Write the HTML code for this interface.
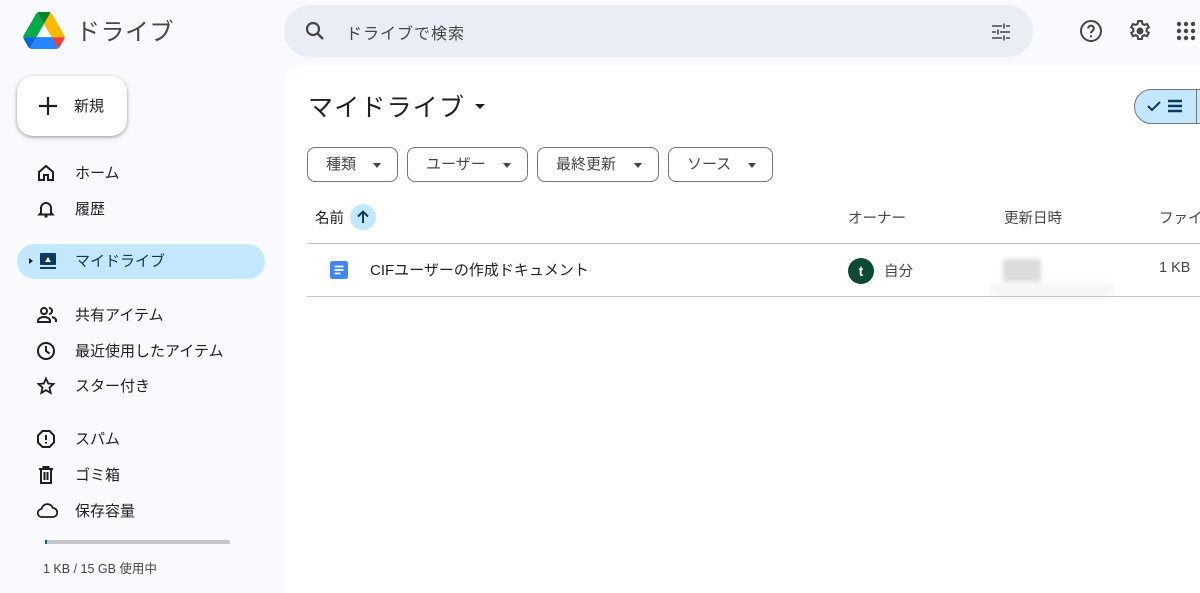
<!DOCTYPE html>
<html><head><meta charset="utf-8">
<style>
*{margin:0;padding:0;box-sizing:border-box}
html{width:1200px;height:593px;overflow:hidden}
body{width:1200px;height:593px;background:#f8fafd;font-family:"Liberation Sans","Noto Sans CJK JP",sans-serif;color:#1f1f1f;position:relative;overflow:hidden;white-space:nowrap}
.a{position:absolute}
.nav{position:absolute;left:0;width:270px;height:36px;font-size:15px;color:#1f1f1f}
.nav svg{position:absolute;left:36px;top:8px}
.nav span{position:absolute;left:75px;top:7px}
.chip{position:absolute;top:147px;height:35px;border:1px solid #747775;border-radius:8px;font-size:15px;color:#444746}
.chip span{position:absolute;left:18px;top:5px}
.chip i{position:absolute;right:16px;top:15px;border-left:4.5px solid transparent;border-right:4.5px solid transparent;border-top:5px solid #444746}
</style></head><body>
<svg class="a" style="left:23px;top:12px" width="42" height="37" viewBox="0 0 87.3 78">
<path d="M6.6 66.85l3.85 6.65c.8 1.4 1.950 2.5 3.3 3.3L27.5 53H0c0 1.55.4 3.1 1.2 4.5z" fill="#0066da"/>
<path d="M43.65 25L29.9 1.2c-1.35.8-2.5 1.9-3.3 3.3L1.2 48.5A9 9 0 000 53h27.5z" fill="#00ac47"/>
<path d="M73.55 76.8c1.35-.8 2.5-1.9 3.3-3.3l1.6-2.750 7.65-13.25c.8-1.4 1.2-2.95 1.2-4.5H59.8l5.850 11.5z" fill="#ea4335"/>
<path d="M43.65 25L57.4 1.2C56.05.4 54.5 0 52.9 0H34.4c-1.6 0-3.15.45-4.5 1.2z" fill="#00832d"/>
<path d="M59.8 53H27.5L13.75 76.8c1.35.8 2.9 1.2 4.5 1.2h50.8c1.6 0 3.15-.45 4.5-1.2z" fill="#2684fc"/>
<path d="M73.4 26.5L60.7 4.5c-.8-1.4-1.95-2.5-3.3-3.3L43.65 25 59.8 53h27.45c0-1.55-.4-3.1-1.2-4.5z" fill="#ffba00"/>
</svg>
<div class="a" style="left:76px;top:12px;font-size:24px;color:#444746;letter-spacing:0.5px">ドライブ</div>
<div class="a" style="left:284px;top:5px;width:749px;height:52px;border-radius:26px;background:#e9eef6"></div>
<svg class="a" style="left:303px;top:19px" width="24" height="24" viewBox="0 0 24 24"><circle cx="10" cy="10" r="6" fill="none" stroke="#444746" stroke-width="2.2"/><path d="M14.5 14.5L20 20" stroke="#444746" stroke-width="2.4"/></svg>
<div class="a" style="left:346px;top:20px;font-size:16px;color:#444746;letter-spacing:1px">ドライブで検索</div>
<svg class="a" style="left:989px;top:20px" width="24" height="24" viewBox="0 0 24 24" stroke="#444746" stroke-width="1.6" fill="none"><path d="M3 6h10M17 6h4M15 3.5v5M3 12h4M11 12h10M9 9.5v5M3 18h10M17 18h4M15 15.5v5"/></svg>
<svg class="a" style="left:1079px;top:19px" width="24" height="24" viewBox="0 0 24 24"><circle cx="12" cy="12" r="10" fill="none" stroke="#444746" stroke-width="2"/><path d="M9.2 9.5a2.8 2.8 0 115 1.7c-1.2 1-2.2 1.3-2.2 3" fill="none" stroke="#444746" stroke-width="2"/><circle cx="12" cy="17.3" r="1.2" fill="#444746"/></svg>
<svg class="a" style="left:1127px;top:18px" width="26" height="26" viewBox="0 0 24 24"><path fill="none" stroke="#444746" stroke-width="1.9" d="M10.3 2.8h3.4l.5 2.6 1.7 1 2.5-.9 1.7 2.9-2 1.7v2l2 1.7-1.7 2.9-2.5-.9-1.7 1-.5 2.6h-3.4l-.5-2.6-1.7-1-2.5.9-1.7-2.9 2-1.7v-2l-2-1.7 1.7-2.9 2.5.9 1.7-1z"/><circle cx="12" cy="12" r="3.2" fill="#444746"/></svg>
<svg class="a" style="left:1176px;top:21px" width="24" height="20" viewBox="0 0 24 20" fill="#444746"><circle cx="3" cy="3" r="2.2"/><circle cx="10" cy="3" r="2.2"/><circle cx="17" cy="3" r="2.2"/><circle cx="3" cy="10" r="2.2"/><circle cx="10" cy="10" r="2.2"/><circle cx="17" cy="10" r="2.2"/><circle cx="3" cy="17" r="2.2"/><circle cx="10" cy="17" r="2.2"/><circle cx="17" cy="17" r="2.2"/></svg>
<div class="a" style="left:17px;top:76px;width:110px;height:60px;border-radius:16px;background:#fff;box-shadow:0 1px 3px rgba(0,0,0,.3),0 2px 6px rgba(0,0,0,.12)"></div>
<svg class="a" style="left:37px;top:95px" width="22" height="22" viewBox="0 0 22 22"><path d="M11 2v18M2 11h18" stroke="#1f1f1f" stroke-width="2.2"/></svg>
<div class="a" style="left:74px;top:95px;font-size:15px">新規</div>
<div class="nav" style="top:155px"><svg width="20" height="20" viewBox="0 0 20 20" fill="none" stroke="#1f1f1f" stroke-width="2"><path d="M3 9l7-6 7 6v8h-5v-5H8v5H3z"/></svg><span>ホーム</span></div>
<div class="nav" style="top:191px"><svg width="20" height="20" viewBox="0 0 20 20" fill="none" stroke="#1f1f1f" stroke-width="2"><path d="M5 14V9a5 5 0 0110 0v5l1.5 1.5h-13zM8.5 17.5h3"/></svg><span>履歴</span></div>
<div class="a" style="left:17px;top:244px;width:248px;height:35px;border-radius:18px;background:#c2e7ff"></div>
<div class="a" style="left:29px;top:258px;border-top:3.5px solid transparent;border-bottom:3.5px solid transparent;border-left:4px solid #1f1f1f"></div>
<svg class="a" style="left:38px;top:251px" width="20" height="20" viewBox="0 0 20 20"><rect x="2" y="2" width="16" height="12" rx="1" fill="#0b3a5e"/><rect x="2" y="16" width="16" height="2" fill="#0b3a5e"/><path d="M7 11l3-5 3 5z" fill="#fff"/></svg>
<div class="a" style="left:75px;top:250px;font-size:15px;color:#0b3a5e">マイドライブ</div>
<div class="nav" style="top:297px"><svg width="22" height="20" viewBox="0 0 22 20" fill="none" stroke="#1f1f1f" stroke-width="2"><circle cx="8" cy="6" r="3"/><path d="M2 17v-1.5c0-2 3-3.5 6-3.5s6 1.5 6 3.5V17zM13 3a3 3 0 010 6M16 12c2 .5 4 1.5 4 3.5V17"/></svg><span>共有アイテム</span></div>
<div class="nav" style="top:333px"><svg width="20" height="20" viewBox="0 0 20 20" fill="none" stroke="#1f1f1f" stroke-width="2"><circle cx="10" cy="10" r="8"/><path d="M10 5v5l3.5 2.5"/></svg><span>最近使用したアイテム</span></div>
<div class="nav" style="top:368px"><svg width="20" height="20" viewBox="0 0 20 20" fill="none" stroke="#1f1f1f" stroke-width="1.8"><path d="M10 2.5l2.2 5 5.3.5-4 3.6 1.2 5.3L10 14.2l-4.7 2.7 1.2-5.3-4-3.6 5.3-.5z"/></svg><span>スター付き</span></div>
<div class="nav" style="top:421px"><svg width="20" height="20" viewBox="0 0 20 20" fill="none" stroke="#1f1f1f" stroke-width="2"><path d="M6.5 2h7L18 6.5v7L13.5 18h-7L2 13.5v-7z"/><path d="M10 6v5M10 13v1.5"/></svg><span>スパム</span></div>
<div class="nav" style="top:457px"><svg width="20" height="20" viewBox="0 0 20 20" fill="none" stroke="#1f1f1f" stroke-width="2"><path d="M3 4h14M7.5 4V2h5v2M5 4v14h10V4M8.5 7v8M11.5 7v8"/></svg><span>ゴミ箱</span></div>
<div class="nav" style="top:493px"><svg width="22" height="20" viewBox="0 0 22 20" fill="none" stroke="#1f1f1f" stroke-width="1.8" style="left:36px"><path d="M6 16a4 4 0 01-.5-8A6 6 0 0117 7a4.5 4.5 0 01-.5 9z"/></svg><span>保存容量</span></div>
<div class="a" style="left:45px;top:540px;width:185px;height:4px;border-radius:2px;background:#c4c7c5"></div>
<div class="a" style="left:45px;top:540px;width:2px;height:4px;background:#0b57d0"></div>
<div class="a" style="left:43px;top:558px;font-size:12.5px;color:#444746">1 KB / 15 GB 使用中</div>
<div class="a" style="left:284px;top:66px;width:916px;height:527px;background:#fff;border-radius:16px 0 0 0"></div>
<div class="a" style="left:308px;top:88px;font-size:25px;color:#1f1f1f;letter-spacing:1.2px">マイドライブ</div>
<div class="a" style="left:475px;top:104px;border-left:5px solid transparent;border-right:5px solid transparent;border-top:5px solid #1f1f1f"></div>
<div class="a" style="left:1134px;top:89px;width:80px;height:35px;border:1px solid #747775;border-radius:18px 0 0 18px;background:#c2e7ff"></div>
<div class="a" style="left:1196px;top:89px;width:1px;height:35px;background:#747775"></div>
<svg class="a" style="left:1146px;top:98px" width="44" height="16" viewBox="0 0 44 16"><path d="M2 8l4 4 8-8" fill="none" stroke="#0b3a5e" stroke-width="2"/><path d="M22 3h14M22 8h14M22 13h14" stroke="#0b3a5e" stroke-width="2.4"/></svg>
<div class="chip" style="left:307px;width:91px"><span>種類</span><i></i></div>
<div class="chip" style="left:407px;width:121px"><span>ユーザー</span><i></i></div>
<div class="chip" style="left:537px;width:122px"><span>最終更新</span><i></i></div>
<div class="chip" style="left:668px;width:105px"><span>ソース</span><i></i></div>
<div class="a" style="left:315px;top:207px;font-size:14.5px;color:#1f1f1f">名前</div>
<div class="a" style="left:350px;top:204px;width:26px;height:26px;border-radius:13px;background:#c2e7ff"></div>
<svg class="a" style="left:355px;top:209px" width="16" height="16" viewBox="0 0 16 16"><path d="M8 14V3M3 7.5l5-5 5 5" fill="none" stroke="#0b3a5e" stroke-width="2"/></svg>
<div class="a" style="left:848px;top:207px;font-size:14.5px;color:#444746">オーナー</div>
<div class="a" style="left:1004px;top:207px;font-size:14.5px;color:#444746">更新日時</div>
<div class="a" style="left:1159px;top:207px;font-size:14.5px;color:#444746">ファイ</div>
<div class="a" style="left:307px;top:243px;width:893px;height:1px;background:#c4c7c5"></div>
<svg class="a" style="left:330px;top:261px" width="18" height="18" viewBox="0 0 18 18"><rect x="0" y="0" width="18" height="18" rx="2.5" fill="#4285f4"/><path d="M4.5 5.5h9M4.5 9h9M4.5 12.5h6" stroke="#fff" stroke-width="1.7"/></svg>
<div class="a" style="left:370px;top:259px;font-size:15px;color:#1f1f1f">CIFユーザーの作成ドキュメント</div>
<div class="a" style="left:848px;top:258px;width:26px;height:26px;border-radius:13px;background:#0d4a35;color:#fff;font-size:14px;font-weight:bold;text-align:center;line-height:26px">t</div>
<div class="a" style="left:884px;top:260px;font-size:14.5px;color:#444746">自分</div>
<div class="a" style="left:1003px;top:259px;width:38px;height:24px;background:#dcdcdc;filter:blur(2px)"></div>
<div class="a" style="left:990px;top:283px;width:124px;height:16px;background:#f5f5f5;filter:blur(4px)"></div>
<div class="a" style="left:1159px;top:260px;font-size:14.5px;color:#444746">1 KB</div>
<div class="a" style="left:307px;top:296px;width:893px;height:1px;background:#c4c7c5"></div>
</body></html>
